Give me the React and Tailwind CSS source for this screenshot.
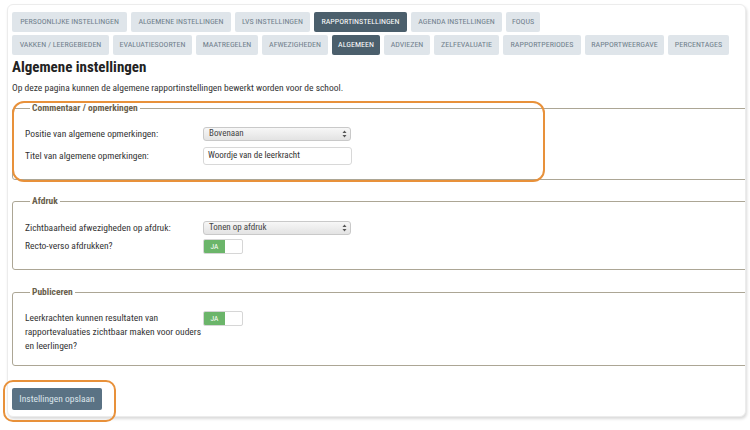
import React from "react";

const FONT = { fontFamily: '"Liberation Sans Narrow", "Roboto Condensed", Roboto, "Liberation Sans", sans-serif' };

const row1 = [
  ["PERSOONLIJKE INSTELLINGEN", "w-[115px]"],
  ["ALGEMENE INSTELLINGEN", "w-[100px]"],
  ["LVS INSTELLINGEN", "w-[75px]"],
  ["RAPPORTINSTELLINGEN", "w-[93px]", true],
  ["AGENDA INSTELLINGEN", "w-[91px]"],
  ["FOQUS", "w-[34px]"],
];
const row2 = [
  ["VAKKEN / LEERGEBIEDEN", "w-[97px]"],
  ["EVALUATIESOORTEN", "w-[79px]"],
  ["MAATREGELEN", "w-[62px]"],
  ["AFWEZIGHEDEN", "w-[66px]"],
  ["ALGEMEEN", "w-[48px]", true],
  ["ADVIEZEN", "w-[46px]"],
  ["ZELFEVALUATIE", "w-[65px]"],
  ["RAPPORTPERIODES", "w-[78px]"],
  ["RAPPORTWEERGAVE", "w-[79px]"],
  ["PERCENTAGES", "w-[61px]"],
];

function Tab({ label, w, active }) {
  return (
    <div
      className={
        "h-[20px] flex items-center justify-center rounded-[2px] text-[8px] whitespace-nowrap " +
        w +
        (active ? " bg-[#4b5f6c] text-white" : " bg-[#dfe5ea] text-[#70808c]")
      }
    >
      {label}
    </div>
  );
}

function Select({ value }) {
  return (
    <div className="w-[148px] h-[14px] rounded-[3px] border border-[#c9c9c9] bg-gradient-to-b from-[#f7f7f7] to-[#e3e3e3] flex items-center justify-between pl-[5px] pr-[3px] text-[9px] text-[#444]">
      <span>{value}</span>
      <svg width="5" height="8" viewBox="0 0 5 8">
        <path d="M2.5 0.5 L4.5 3 L0.5 3 Z" fill="#555" />
        <path d="M2.5 7.5 L4.5 5 L0.5 5 Z" fill="#555" />
      </svg>
    </div>
  );
}

function Toggle() {
  return (
    <div className="w-[40px] h-[15px] rounded-[2px] border border-[#d6d6d6] bg-white flex overflow-hidden">
      <div className="w-[21px] h-full bg-[#6bb56a] text-white text-[7.5px] flex items-center justify-center">JA</div>
    </div>
  );
}

function Fieldset({ legend, className, children }) {
  return (
    <fieldset className={"w-[760px] border border-[#aca695] rounded-[3px] pl-[12px] " + className}>
      <legend className="ml-[5px] px-[2px] text-[9.5px] font-bold text-[#6a5f4c] leading-[12px]">{legend}</legend>
      {children}
    </fieldset>
  );
}

export default function App() {
  return (
    <div className="w-[750px] h-[430px] bg-white relative overflow-hidden text-[#333]" style={FONT}>
      <div className="ml-[7px] mt-[4px] w-[739px] h-[413px] bg-white rounded-[6px] border border-[#ececec] shadow-[1px_2px_3px_rgba(0,0,0,0.15)] overflow-hidden pl-[4px] pt-[7px]">
        <div className="flex flex-col gap-[3px]">
          <div className="flex gap-[4px]">
            {row1.map(([l, w, a]) => (
              <Tab key={l} label={l} w={w} active={a} />
            ))}
          </div>
          <div className="flex gap-[4px]">
            {row2.map(([l, w, a]) => (
              <Tab key={l} label={l} w={w} active={a} />
            ))}
          </div>
        </div>
        <h1 className="text-[15px] font-bold text-[#222] leading-[18px] mt-[3px]">Algemene instellingen</h1>
        <p className="text-[9.5px] leading-[12px] mt-[6px] text-[#333]">
          Op deze pagina kunnen de algemene rapportinstellingen bewerkt worden voor de school.
        </p>

        <Fieldset legend="Commentaar / opmerkingen" className="mt-[8px] h-[78px] pt-[13px]">
          <div className="flex items-center h-[14px]">
            <div className="w-[178px] text-[9.5px]">Positie van algemene opmerkingen:</div>
            <Select value="Bovenaan" />
          </div>
          <div className="flex items-center h-[18px] mt-[6px]">
            <div className="w-[178px] text-[9.5px]">Titel van algemene opmerkingen:</div>
            <div className="w-[149px] h-[18px] rounded-[3px] border border-[#d8d8d8] bg-white flex items-center pl-[4px] text-[9px] text-[#333]">
              Woordje van de leerkracht
            </div>
          </div>
        </Fieldset>

        <Fieldset legend="Afdruk" className="mt-[15px] h-[75px] pt-[14px]">
          <div className="flex items-center h-[14px]">
            <div className="w-[178px] text-[9.5px]">Zichtbaarheid afwezigheden op afdruk:</div>
            <Select value="Tonen op afdruk" />
          </div>
          <div className="flex items-center h-[15px] mt-[4px]">
            <div className="w-[178px] text-[9.5px]">Recto-verso afdrukken?</div>
            <Toggle />
          </div>
        </Fieldset>

        <Fieldset legend="Publiceren" className="mt-[16px] h-[80px] pt-[13px]">
          <div className="flex items-start">
            <div className="w-[178px] text-[9.5px] leading-[14px] whitespace-nowrap">
              Leerkrachten kunnen resultaten van
              <br />
              rapportevaluaties zichtbaar maken voor ouders
              <br />
              en leerlingen?
            </div>
            <Toggle />
          </div>
        </Fieldset>

        <button className="mt-[22px] w-[90px] h-[22px] bg-[#5a7284] text-[#dbe5eb] text-[9.5px] rounded-[2px] flex items-center justify-center">
          Instellingen opslaan
        </button>
      </div>

      <div className="absolute left-[12px] top-[101px] w-[533px] h-[81px] rounded-[12px] border-2 border-[#e8913a] pointer-events-none" />
      <div className="absolute left-[3px] top-[380px] w-[113px] h-[42px] rounded-[10px] border-2 border-[#e8913a] pointer-events-none" />
    </div>
  );
}
